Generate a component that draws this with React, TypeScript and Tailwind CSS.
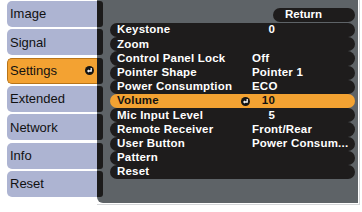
import React from "react";

const tabs = ["Image", "Signal", "Settings", "Extended", "Network", "Info", "Reset"];

type Row = { label: string; value?: string; num?: boolean; active?: boolean };

const rows: Row[] = [
  { label: "Keystone", value: "0", num: true },
  { label: "Zoom" },
  { label: "Control Panel Lock", value: "Off" },
  { label: "Pointer Shape", value: "Pointer 1" },
  { label: "Power Consumption", value: "ECO" },
  { label: "Volume", value: "10", num: true, active: true },
  { label: "Mic Input Level", value: "5", num: true },
  { label: "Remote Receiver", value: "Front/Rear" },
  { label: "User Button", value: "Power Consum..." },
  { label: "Pattern" },
  { label: "Reset" },
];

function EnterIcon() {
  return (
    <svg width="9" height="9" viewBox="0 0 9 9" className="shrink-0">
      <circle cx="4.5" cy="4.5" r="4.5" fill="#141414" />
      <path d="M6.2 2 V5 H3.4" stroke="#fff" strokeWidth="1.3" fill="none" />
      <path d="M3.9 3.2 L1.9 5 L3.9 6.8 Z" fill="#fff" />
    </svg>
  );
}

export default function App() {
  return (
    <div
      className="w-[362px] h-[212px] bg-white flex items-start overflow-hidden"
      style={{ fontFamily: '"Liberation Sans", Arial, sans-serif' }}
    >
      {/* Tabs */}
      <div className="w-[97px] pl-[7px] pt-[1px] flex flex-col gap-[2.33px]">
        {tabs.map((t) => {
          const on = t === "Settings";
          return (
            <div
              key={t}
              className={
                on
                  ? "h-[26px] rounded-l-[5px] bg-[#f3a232] border border-r-0 border-[#b87418] flex items-center pl-[2px] pr-[3px] text-[13px] text-[#111]"
                  : "h-[26px] rounded-l-[5px] bg-[#adb4d2] flex items-center pl-[3px] text-[13px] text-[#111]"
              }
            >
              <span className="flex-1">{t}</span>
              {on && <EnterIcon />}
            </div>
          );
        })}
      </div>

      {/* Menu panel */}
      <div className="border-r border-b border-[#d4d6d8] pr-[1px] pb-[1px]">
        <div className="w-[261px] h-[203px] bg-[#5e6367] rounded-bl-[6px] flex">
          <div className="w-[6px] pt-[1px] flex flex-col gap-[2.33px]">
            {tabs.map((t) => (
              <div key={t} className="h-[26px] bg-[#1c1b1b] rounded-r-[3px]" />
            ))}
          </div>
          <div className="flex-1 pl-[7px] pr-[3px] pt-[8px] flex flex-col">
            <div className="ml-auto w-[82px] h-[14px] bg-[#1e1c1c] rounded-full flex items-center pl-[12px] text-[11.5px] font-bold text-white">
              Return
            </div>
            <div className="mt-[1px] flex flex-col">
              {rows.map((r) => (
                <div
                  key={r.label}
                  className={
                    r.active
                      ? "h-[14.2px] rounded-full bg-[#f3a232] flex items-center pl-[7px] text-[11.5px] font-bold text-[#111] tracking-[0.2px]"
                      : "h-[14.2px] rounded-full bg-[#1e1c1c] flex items-center pl-[7px] text-[11.5px] font-bold text-white tracking-[0.2px]"
                  }
                >
                  <span className="w-[124px] whitespace-nowrap">{r.label}</span>
                  <span className="w-[11px] flex items-center">{r.active && <EnterIcon />}</span>
                  {r.value &&
                    (r.num ? (
                      <span className="w-[23px] text-right">{r.value}</span>
                    ) : (
                      <span className="whitespace-nowrap">{r.value}</span>
                    ))}
                </div>
              ))}
            </div>
          </div>
        </div>
      </div>
    </div>
  );
}
